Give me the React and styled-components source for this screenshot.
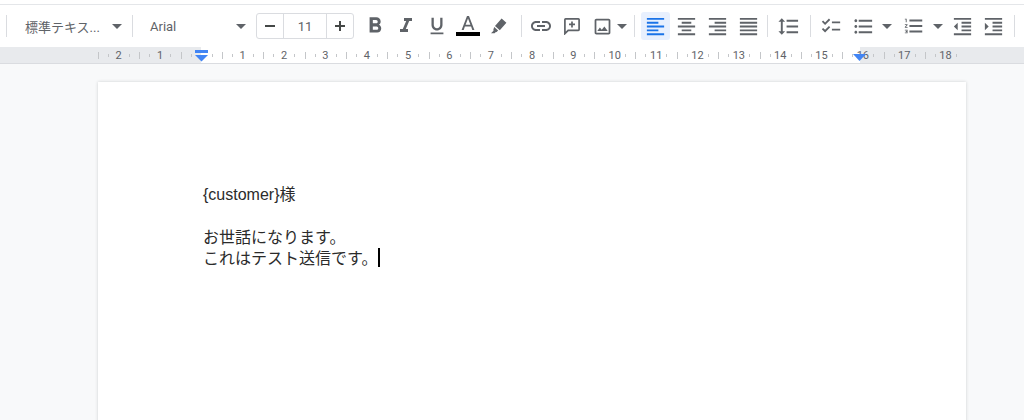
import React from 'react';
import styled, { createGlobalStyle } from 'styled-components';
import {
  MdFormatBold, MdFormatItalic, MdFormatUnderlined, MdLink, MdOutlineImage,
  MdFormatAlignLeft, MdFormatAlignCenter, MdFormatAlignRight, MdFormatAlignJustify, MdFormatLineSpacing,
  MdChecklist, MdFormatListBulleted, MdFormatListNumbered, MdFormatIndentDecrease, MdFormatIndentIncrease,
} from 'react-icons/md';

const GlobalStyle = createGlobalStyle`
  html, body { margin: 0; padding: 0; height: 420px; overflow: hidden; background: #f8f9fa; }
  body { font-family: Roboto, "Noto Sans CJK JP", sans-serif; }
`;

const Shell = styled.div`
  width: 1024px;
  height: 420px;
  display: flex;
  flex-direction: column;
  overflow: hidden;
`;

const TopStrip = styled.div`
  height: 4px;
  flex: none;
  background: #fff;
  border-bottom: 1px solid #e4e6e9;
`;

const Toolbar = styled.div`
  height: 42px;
  flex: none;
  background: #fff;
  display: flex;
  align-items: center;
  padding-left: 6px;
  color: #5f6368;
`;

const Divider = styled.div`
  width: 1px;
  height: 22px;
  flex: none;
  background: #dadce0;
  margin: 0 ${p => p.$right ?? 5}px 0 ${p => p.$left ?? 5}px;
`;

const Select = styled.div`
  width: ${p => p.$width}px;
  flex: none;
  display: flex;
  align-items: center;
  justify-content: space-between;
  box-sizing: border-box;
  padding: 0 ${p => p.$right}px 0 ${p => p.$left}px;
  font-size: 13px;
  color: #5f6368;
  white-space: nowrap;
`;

const Caret = styled.span`
  flex: none;
  width: 0;
  height: 0;
  border-left: 5px solid transparent;
  border-right: 5px solid transparent;
  border-top: 5px solid #5f6368;
`;

const SizeBox = styled.div`
  width: 98px;
  height: 26px;
  flex: none;
  box-sizing: border-box;
  display: grid;
  grid-template-columns: 26px 1fr 26px;
  align-items: center;
  justify-items: center;
  border: 1px solid #dadce0;
  border-radius: 3px;
  margin-left: 5px;
  font-size: 13px;
  color: #444746;
`;

const SizeValue = styled.div`
  width: 100%;
  height: 100%;
  box-sizing: border-box;
  border-left: 1px solid #dadce0;
  border-right: 1px solid #dadce0;
  display: flex;
  align-items: center;
  justify-content: center;
  color: #5f6368;
`;

const ToolRow = styled.div`
  display: flex;
  align-items: center;
  gap: 2px;
  margin-left: ${p => p.$left ?? 0}px;
`;

const Tool = styled.div`
  width: ${p => p.$width ?? 29}px;
  height: 28px;
  flex: none;
  display: flex;
  align-items: center;
  justify-content: center;
  gap: ${p => p.$gap ?? 0}px;
  border-radius: 3px;
  background: ${p => (p.$active ? '#e8f0fe' : 'transparent')};
  color: ${p => (p.$active ? '#1a73e8' : '#5f6368')};
  font-size: 22px;
`;

const ColorStack = styled.div`
  display: flex;
  flex-direction: column;
  align-items: center;
  gap: 1px;
`;

const ColorBar = styled.div`
  width: 24px;
  height: 4px;
  background: #000;
`;

const Ruler = styled.div`
  height: 16px;
  flex: none;
  position: relative;
  display: flex;
  padding-left: 98px;
  overflow: hidden;
  background: linear-gradient(to right, #e8eaed 201px, #fff 201px, #fff 860px, #e8eaed 860px);
  border-bottom: 1px solid #dadce0;
`;

const RulerCell = styled.div`
  width: 41.35px;
  flex: none;
  display: flex;
  align-items: center;
  justify-content: center;
  font-size: 11px;
  color: #5f6368;
  background-image:
    linear-gradient(#c4c6c9, #c4c6c9),
    linear-gradient(#c4c6c9, #c4c6c9),
    linear-gradient(#c4c6c9, #c4c6c9);
  background-repeat: no-repeat;
  background-size: 1px 7px, 1px 3px, 1px 3px;
  background-position: 0 5px, 10px 7px, 31px 7px;
`;

const Marker = styled.svg`
  position: absolute;
  top: ${p => p.$top}px;
  left: ${p => p.$left}px;
`;

const Canvas = styled.div`
  flex: 1;
  min-height: 0;
  background: #f8f9fa;
  padding: 18px 0 0 98px;
`;

const Page = styled.div`
  width: 868px;
  height: 500px;
  box-sizing: border-box;
  padding: 100px 0 0 105px;
  background: #fff;
  box-shadow: 0 0 3px rgba(60, 64, 67, 0.22);
  font-family: "Liberation Sans", "Noto Sans CJK JP", sans-serif;
  font-size: 16px;
  color: #2b2b2b;
`;

const Line = styled.div`
  height: 21.5px;
  white-space: nowrap;
  display: flex;
  align-items: center;
`;

const Cursor = styled.span`
  width: 2px;
  height: 19px;
  background: #000;
  margin-left: 1px;
`;

const TextColorIcon = () => (
  <svg width="18" height="15" viewBox="0 0 18 15" fill="currentColor">
    <path d="M8 0h2l5.4 14h-2.1l-1.2-3.4H5.9L4.7 14H2.6L8 0zm3.4 8.8L9 2.4 6.6 8.8h4.8z" />
  </svg>
);

const HighlightIcon = () => (
  <svg width="18" height="18" viewBox="0 0 18 18" fill="currentColor">
    <path d="M11.6 1.6l4.8 4.2-6.6 7.4-4.8-4.2 6.6-7.4zM4.2 10l3.9 3.5-1.5 1.6-1.1.2-.9.9L1 16.3l2.5-2.6-.1-1.1.8-2.6z" />
  </svg>
);

const CommentIcon = () => (
  <svg width="18" height="18" viewBox="0 0 18 18" fill="none" stroke="currentColor" strokeWidth="1.7">
    <path d="M2.6 1.9h12.8c.4 0 .7.3.7.7v10c0 .4-.3.7-.7.7H5.2l-3.3 3.3V2.6c0-.4.3-.7.7-.7z" />
    <path d="M9 4.4v6M6 7.4h6" />
  </svg>
);

const Minus = () => (
  <svg width="10" height="2" viewBox="0 0 10 2"><rect width="10" height="2" fill="#444746" /></svg>
);

const Plus = () => (
  <svg width="10" height="10" viewBox="0 0 10 10" fill="#444746"><path d="M4 0h2v4h4v2H6v4H4V6H0V4h4z" /></svg>
);

const rulerLabels = ['2', '1', '', '1', '2', '3', '4', '5', '6', '7', '8', '9', '10', '11', '12', '13', '14', '15', '16', '17', '18'];

export default function App() {
  return (
    <Shell>
      <GlobalStyle />
      <TopStrip />
      <Toolbar>
        <Divider $left={0} $right={0} />
        <Select $width={125} $left={18} $right={10}>
          標準テキス...
          <Caret />
        </Select>
        <Divider $left={0} $right={0} />
        <Select $width={118} $left={17} $right={5}>
          Arial
          <Caret />
        </Select>
        <SizeBox>
          <Minus />
          <SizeValue>11</SizeValue>
          <Plus />
        </SizeBox>
        <ToolRow $left={6}>
          <Tool><MdFormatBold size={26} /></Tool>
          <Tool><MdFormatItalic size={24} /></Tool>
          <Tool><MdFormatUnderlined size={22} /></Tool>
          <Tool>
            <ColorStack>
              <TextColorIcon />
              <ColorBar />
            </ColorStack>
          </Tool>
          <Tool><HighlightIcon /></Tool>
        </ToolRow>
        <Divider $left={8} $right={4} />
        <ToolRow>
          <Tool><MdLink size={24} /></Tool>
          <Tool><CommentIcon /></Tool>
          <Tool $width={42} $gap={4}>
            <MdOutlineImage size={21} />
            <Caret />
          </Tool>
        </ToolRow>
        <Divider $left={4} $right={6} />
        <ToolRow>
          <Tool $active><MdFormatAlignLeft size={23} /></Tool>
          <Tool><MdFormatAlignCenter size={23} /></Tool>
          <Tool><MdFormatAlignRight size={23} /></Tool>
          <Tool><MdFormatAlignJustify size={23} /></Tool>
        </ToolRow>
        <Divider $left={4} $right={6} />
        <ToolRow>
          <Tool><MdFormatLineSpacing size={23} /></Tool>
        </ToolRow>
        <Divider $left={7} $right={5} />
        <ToolRow>
          <Tool><MdChecklist size={22} /></Tool>
          <Tool $width={50} $gap={7}>
            <MdFormatListBulleted size={23} />
            <Caret />
          </Tool>
          <Tool $width={47} $gap={8}>
            <MdFormatListNumbered size={22} />
            <Caret />
          </Tool>
          <Tool><MdFormatIndentDecrease size={23} /></Tool>
          <Tool><MdFormatIndentIncrease size={23} /></Tool>
        </ToolRow>
        <Divider $left={6} $right={0} />
      </Toolbar>
      <Ruler>
        {rulerLabels.map((label, i) => (
          <RulerCell key={i}>{label}</RulerCell>
        ))}
        <Marker $top={3} $left={195} width="13" height="12" viewBox="0 0 13 12">
          <rect x="0" y="0" width="13" height="3" fill="#4285f4" />
          <path d="M0 5h13L6.5 11.5z" fill="#4285f4" />
        </Marker>
        <Marker $top={7} $left={853} width="13" height="8" viewBox="0 0 13 8">
          <path d="M0 0h13L6.5 7z" fill="#4285f4" />
        </Marker>
      </Ruler>
      <Canvas>
        <Page>
          <Line>{'{customer}'}様</Line>
          <Line />
          <Line>お世話になります。</Line>
          <Line>これはテスト送信です。<Cursor /></Line>
        </Page>
      </Canvas>
    </Shell>
  );
}
